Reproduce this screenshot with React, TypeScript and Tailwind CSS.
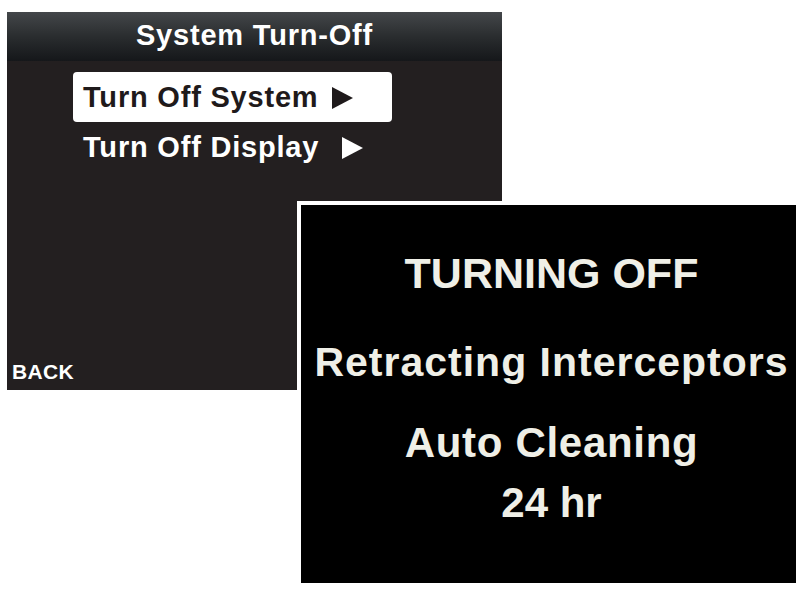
import React from "react";

const Tri = ({ color }: { color: string }) => (
  <svg width="21" height="22" viewBox="0 0 21 22" className="shrink-0">
    <polygon points="0,0 21,11 0,22" fill={color} />
  </svg>
);

export default function App() {
  return (
    <div
      className="relative w-[811px] h-[592px] bg-white overflow-hidden"
      style={{ fontFamily: '"Liberation Sans", Arial, Helvetica, sans-serif' }}
    >
      {/* Left screen */}
      <div className="ml-[7px] mt-[12px] w-[495px] h-[378px] bg-[#231f20] flex flex-col">
        <div className="h-[49px] flex items-center justify-center bg-gradient-to-b from-[#44474a] via-[#2a2d2f] to-[#15171a] pb-[2px]">
          <span className="text-white font-bold text-[29px] leading-none tracking-[0.8px]">
            System Turn-Off
          </span>
        </div>
        <div className="mt-[11px] ml-[66px] flex flex-col">
          <div className="w-[319px] h-[50px] bg-white rounded-[4px] flex items-center pl-[10px] pt-[1px]">
            <span className="text-[#1f1a1b] font-bold text-[29px] leading-none tracking-[0.8px]">
              Turn Off System
            </span>
            <span className="ml-[14px] flex">
              <Tri color="#1f1a1b" />
            </span>
          </div>
          <div className="h-[50px] flex items-center pl-[10px] pt-[1px]">
            <span className="text-white font-bold text-[29px] leading-none tracking-[0.8px]">
              Turn Off Display
            </span>
            <span className="ml-[23px] flex">
              <Tri color="#ffffff" />
            </span>
          </div>
        </div>
        <div className="mt-auto pl-[5px] pb-[4px]">
          <span className="text-white font-bold text-[21px] leading-none tracking-[0.3px]">
            BACK
          </span>
        </div>
      </div>

      {/* Right screen, overlapping */}
      <div className="absolute left-[297px] top-[201px] border-l-4 border-t-4 border-white">
        <div className="w-[495px] h-[378px] bg-black flex flex-col items-center pl-[6px] text-[#efefe7] font-bold">
          <div className="mt-[47px] text-[43px] leading-none whitespace-nowrap">TURNING OFF</div>
          <div className="mt-[47px] text-[41px] leading-none tracking-[1px] whitespace-nowrap">
            Retracting Interceptors
          </div>
          <div className="mt-[39px] text-[42px] leading-none tracking-[0.7px] whitespace-nowrap">
            Auto Cleaning
          </div>
          <div className="mt-[18px] text-[42px] leading-none whitespace-nowrap">24 hr</div>
        </div>
      </div>
    </div>
  );
}
